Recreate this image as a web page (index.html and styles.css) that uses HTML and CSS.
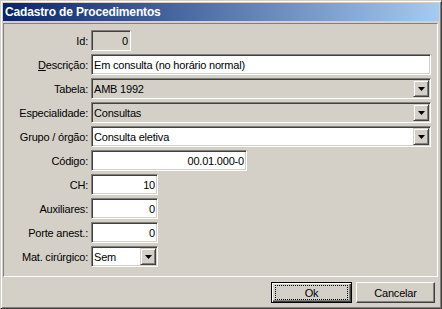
FILE: index.html
```html
<!DOCTYPE html>
<html lang="pt">
<head>
<meta charset="utf-8">
<title>Cadastro de Procedimentos</title>
<link rel="stylesheet" href="styles.css">
</head>
<body>
<div class="window">
  <div class="titlebar"><span class="title">Cadastro de Procedimentos</span></div>
  <div class="panel">
    <label class="lbl">Id:</label>
    <div class="field disabled num w-id">0</div>

    <label class="lbl"><u>D</u>escrição:</label>
    <div class="field w-full">Em consulta (no horário normal)</div>

    <label class="lbl">Tabela:</label>
    <div class="field combo disabled w-full"><span class="val">AMB 1992</span><span class="dd"><svg width="7" height="4" viewBox="0 0 7 4"><polygon points="0,0 7,0 3.5,4" fill="#000"/></svg></span></div>

    <label class="lbl">Especialidade:</label>
    <div class="field combo disabled w-full"><span class="val">Consultas</span><span class="dd"><svg width="7" height="4" viewBox="0 0 7 4"><polygon points="0,0 7,0 3.5,4" fill="#000"/></svg></span></div>

    <label class="lbl">Grupo / órgão:</label>
    <div class="field combo w-full"><span class="val">Consulta eletiva</span><span class="dd"><svg width="7" height="4" viewBox="0 0 7 4"><polygon points="0,0 7,0 3.5,4" fill="#000"/></svg></span></div>

    <label class="lbl">Código:</label>
    <div class="field num w-code">00.01.000-0</div>

    <label class="lbl">CH:</label>
    <div class="field num w-small">10</div>

    <label class="lbl">Auxiliares:</label>
    <div class="field num w-small">0</div>

    <label class="lbl">Porte anest.:</label>
    <div class="field num w-small">0</div>

    <label class="lbl">Mat. cirúrgico:</label>
    <div class="field combo w-small"><span class="val">Sem</span><span class="dd"><svg width="7" height="4" viewBox="0 0 7 4"><polygon points="0,0 7,0 3.5,4" fill="#000"/></svg></span></div>
  </div>
  <div class="footer">
    <button class="btn btn-default"><span class="focus">Ok</span></button>
    <button class="btn btn-cancel">Cancelar</button>
  </div>
</div>
</body>
</html>
```

FILE: styles.css
```css
html, body {
  margin: 0;
  padding: 0;
  background: #d4d0c8;
}

body {
  font-family: "Liberation Sans", Arial, sans-serif;
  font-size: 11px;
  letter-spacing: -0.2px;
  color: #000;
}

.window {
  width: 442px;
  height: 309px;
  box-sizing: border-box;
  background: #d4d0c8;
  border: 1px solid;
  border-color: #d4d0c8 #404040 #404040 #d4d0c8;
  box-shadow: inset 1px 1px #fff, inset -1px -1px #808080;
  padding: 2px;
  display: flex;
  flex-direction: column;
}

.titlebar {
  height: 18px;
  background: linear-gradient(to right, #0a246a, #a6caf0);
  display: flex;
  align-items: center;
  padding-left: 2px;
}

.title {
  color: #fff;
  font-weight: bold;
  font-size: 12px;
  letter-spacing: -0.15px;
}

.panel {
  margin-top: 2px;
  width: 435px;
  height: 254px;
  box-sizing: border-box;
  border: 1px solid;
  border-color: #808080 #fff #fff #808080;
  padding-top: 6px;
  display: grid;
  grid-template-columns: 84px 1fr;
  column-gap: 3px;
  row-gap: 3px;
  align-content: start;
  align-items: center;
}

.lbl {
  text-align: right;
  white-space: nowrap;
}

.lbl u {
  text-decoration: underline;
}

.field {
  height: 21px;
  box-sizing: border-box;
  background: #fff;
  border: 1px solid;
  border-color: #808080 #fff #fff #808080;
  box-shadow: inset 1px 1px #404040, inset -1px -1px #d4d0c8;
  display: flex;
  align-items: center;
  padding: 0 2px 0 2px;
  white-space: nowrap;
  justify-self: start;
}

.field.disabled {
  background: #d4d0c8;
}

.field.num {
  justify-content: flex-end;
}

.field.combo {
  padding: 1px 1px 1px 2px;
  align-items: stretch;
}

.combo .val {
  flex: 1;
  display: flex;
  align-items: center;
}

.dd {
  width: 16px;
  box-sizing: border-box;
  background: #d4d0c8;
  border: 1px solid;
  border-color: #d4d0c8 #404040 #404040 #d4d0c8;
  box-shadow: inset 1px 1px #fff, inset -1px -1px #808080;
  display: flex;
  align-items: center;
  justify-content: center;
}

.dd svg {
  display: block;
}

.w-id { width: 40px; }
.w-full { width: 340px; }
.w-code { width: 156px; }
.w-small { width: 67px; }

.footer {
  display: flex;
  justify-content: flex-end;
  gap: 4px;
  padding: 5px 4px 0 0;
}

.btn {
  height: 21px;
  box-sizing: border-box;
  margin: 0;
  background: #d4d0c8;
  font-family: "Liberation Sans", Arial, sans-serif;
  font-size: 11px;
  letter-spacing: -0.2px;
  color: #000;
  border-radius: 0;
  cursor: default;
}

.btn-cancel {
  width: 79px;
  border: 1px solid;
  border-color: #fff #404040 #404040 #fff;
  box-shadow: inset -1px -1px #808080;
  padding: 0;
}

.btn-default {
  width: 81px;
  border: 1px solid #000;
  box-shadow: inset 1px 1px #fff, inset -1px -1px #404040, inset -2px -2px #808080;
  padding: 2px 3px;
}

.focus {
  display: flex;
  align-items: center;
  justify-content: center;
  height: 100%;
  box-sizing: border-box;
  border: 1px dotted #000;
}
```
